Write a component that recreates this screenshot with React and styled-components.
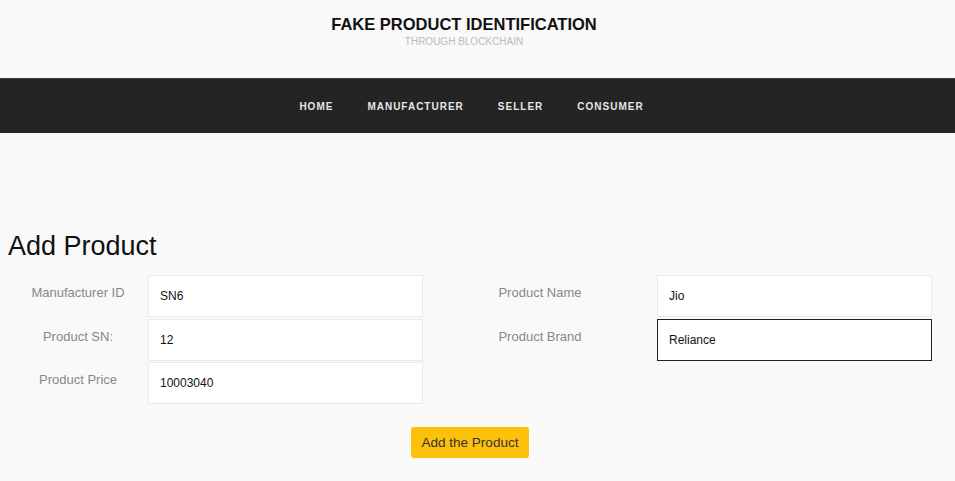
import React from "react";
import styled, { createGlobalStyle } from "styled-components";

const GlobalStyle = createGlobalStyle`
  html, body {
    margin: 0;
    padding: 0;
    background: #f9f9f9;
    font-family: "Liberation Sans", Arial, sans-serif;
  }
`;

const Page = styled.div`
  min-height: 481px;
  background: #f9f9f9;
`;

const Header = styled.header`
  width: 940px;
  box-sizing: border-box;
  padding: 14px 12px 0 0;
  height: 78px;
  display: flex;
  flex-direction: column;
  align-items: center;
  gap: 2px;
`;

const Title = styled.h1`
  margin: 0;
  font-size: 16.5px;
  line-height: 20px;
  font-weight: 700;
  color: #111;
`;

const Subtitle = styled.p`
  margin: 0;
  font-size: 10px;
  line-height: 12px;
  color: #bbb;
`;

const NavBar = styled.nav`
  height: 55px;
  background: #242424;
  border-top: 1px solid #3a3a3a;
  box-sizing: border-box;
`;

const NavList = styled.ul`
  width: 940px;
  height: 100%;
  margin: 0;
  padding: 0 0 0 3px;
  box-sizing: border-box;
  list-style: none;
  display: flex;
  justify-content: center;
  align-items: center;
`;

const NavItem = styled.li`
  padding: 0 17px;
  font-size: 10px;
  font-weight: 700;
  letter-spacing: 1px;
  color: #e6e6e6;
`;

const Main = styled.main`
  width: 940px;
  box-sizing: border-box;
  padding: 98px 8px 0 8px;
`;

const Heading = styled.h2`
  margin: 0 0 13px 0;
  font-size: 27px;
  line-height: 31px;
  font-weight: 400;
  color: #111;
`;

const FormGrid = styled.div`
  display: grid;
  grid-template-columns: 140px 275px 234px 275px;
  grid-auto-rows: 42px;
  row-gap: 1.5px;
`;

const Label = styled.label`
  display: flex;
  align-items: center;
  justify-content: center;
  padding-bottom: 7px;
  font-size: 13px;
  color: #888;
`;

const Input = styled.input`
  box-sizing: border-box;
  width: 100%;
  height: 100%;
  margin: 0;
  padding: 0 11px;
  background: #fff;
  border: 1px solid ${(p) => (p.$focused ? "#222" : "#ebebeb")};
  outline: none;
  font-family: "Liberation Sans", Arial, sans-serif;
  font-size: 12px;
  color: #111;
`;

const Actions = styled.div`
  width: 924px;
  display: flex;
  justify-content: center;
  padding-top: 23px;
`;

const Button = styled.button`
  height: 31px;
  padding: 0 11px;
  border: none;
  border-radius: 3px;
  background: #fdc00b;
  color: #333;
  font-family: "Liberation Sans", Arial, sans-serif;
  font-size: 13.5px;
  cursor: pointer;
`;

const navItems = ["HOME", "MANUFACTURER", "SELLER", "CONSUMER"];

export default function App() {
  return (
    <Page>
      <GlobalStyle />
      <Header>
        <Title>FAKE PRODUCT IDENTIFICATION</Title>
        <Subtitle>THROUGH BLOCKCHAIN</Subtitle>
      </Header>
      <NavBar>
        <NavList>
          {navItems.map((item) => (
            <NavItem key={item}>{item}</NavItem>
          ))}
        </NavList>
      </NavBar>
      <Main>
        <Heading>Add Product</Heading>
        <FormGrid>
          <Label>Manufacturer ID</Label>
          <Input defaultValue="SN6" />
          <Label>Product Name</Label>
          <Input defaultValue="Jio" />
          <Label>Product SN:</Label>
          <Input defaultValue="12" />
          <Label>Product Brand</Label>
          <Input defaultValue="Reliance" $focused />
          <Label>Product Price</Label>
          <Input defaultValue="10003040" />
        </FormGrid>
        <Actions>
          <Button>Add the Product</Button>
        </Actions>
      </Main>
    </Page>
  );
}
